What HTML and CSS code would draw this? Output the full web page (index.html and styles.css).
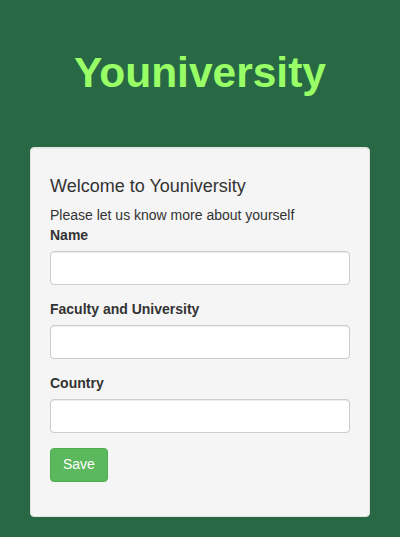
FILE: index.html
```html
<!DOCTYPE html>
<html lang="en">
<head>
<meta charset="utf-8">
<title>Youniversity</title>
<link rel="stylesheet" href="styles.css">
</head>
<body>
<div class="page">
  <h1 class="brand">Youniversity</h1>
  <div class="well">
    <h4 class="welcome">Welcome to Youniversity</h4>
    <p class="intro">Please let us know more about yourself</p>
    <form class="form">
      <div class="form-group">
        <label class="label" for="name">Name</label>
        <input class="input" id="name" type="text">
      </div>
      <div class="form-group">
        <label class="label" for="faculty">Faculty and University</label>
        <input class="input" id="faculty" type="text">
      </div>
      <div class="form-group">
        <label class="label" for="country">Country</label>
        <input class="input" id="country" type="text">
      </div>
      <div class="form-group">
        <button class="btn" type="button">Save</button>
      </div>
    </form>
  </div>
</div>
</body>
</html>
```

FILE: styles.css
```css
* { box-sizing: border-box; }
html, body {
  margin: 0;
  padding: 0;
  background: #296844;
  height: 100%;
}
body {
  font-family: "Liberation Sans", Arial, sans-serif;
  font-size: 14px;
  line-height: 1.42857;
  color: #333;
}
.page {
  padding: 0 30px;
  display: flex;
  flex-direction: column;
}
.brand {
  margin: 49px 0 0;
  height: 47px;
  text-align: center;
  font-size: 42.5px;
  line-height: 47px;
  font-weight: bold;
  color: #99ff66;
}
.well {
  margin-top: 51px;
  background: #f5f5f5;
  border: 1px solid #e3e3e3;
  border-radius: 4px;
  padding: 19px;
  box-shadow: inset 0 1px 1px rgba(0,0,0,0.05);
}
.welcome {
  margin: 10px 0 9px;
  font-size: 18px;
  font-weight: normal;
  line-height: 1.1;
}
.intro {
  margin: 0;
}
.form-group {
  margin-bottom: 15px;
  display: flex;
  flex-direction: column;
  align-items: flex-start;
}
.label {
  font-weight: bold;
  margin-bottom: 5px;
}
.input {
  width: 100%;
  height: 34px;
  padding: 6px 12px;
  font: inherit;
  color: #555;
  background: #fff;
  border: 1px solid #ccc;
  border-radius: 4px;
  box-shadow: inset 0 1px 1px rgba(0,0,0,0.075);
}
.btn {
  height: 34px;
  padding: 6px 12px;
  font: inherit;
  color: #fff;
  background: #5cb85c;
  border: 1px solid #4cae4c;
  border-radius: 4px;
}
```
